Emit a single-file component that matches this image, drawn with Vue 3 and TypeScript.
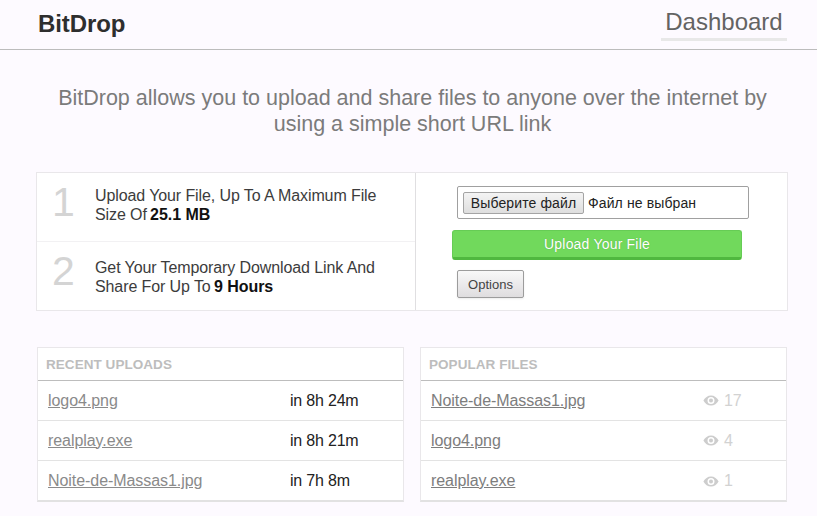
<script setup lang="ts">
interface Recent { name: string; time: string }
interface Popular { name: string; views: number }
const recent: Recent[] = [
  { name: 'logo4.png', time: 'in 8h 24m' },
  { name: 'realplay.exe', time: 'in 8h 21m' },
  { name: 'Noite-de-Massas1.jpg', time: 'in 7h 8m' },
]
const popular: Popular[] = [
  { name: 'Noite-de-Massas1.jpg', views: 17 },
  { name: 'logo4.png', views: 4 },
  { name: 'realplay.exe', views: 1 },
]
</script>

<template>
  <div class="page">
    <header class="top">
      <div class="brand">BitDrop</div>
      <a class="nav">Dashboard</a>
    </header>

    <p class="intro">BitDrop allows you to upload and share files to anyone over the internet by<br />using a simple short URL link</p>

    <section class="upload">
      <div class="steps">
        <div class="step">
          <span class="num">1</span>
          <p>Upload Your File, Up To A Maximum File<br />Size Of <b>25.1 MB</b></p>
        </div>
        <div class="step second">
          <span class="num">2</span>
          <p>Get Your Temporary Download Link And<br />Share For Up To <b>9 Hours</b></p>
        </div>
      </div>
      <div class="form">
        <div class="file">
          <button class="pick">Выберите файл</button>
          <span>Файл не выбран</span>
        </div>
        <button class="send">Upload Your File</button>
        <button class="opts">Options</button>
      </div>
    </section>

    <section class="lists">
      <div class="panel">
        <h3>RECENT UPLOADS</h3>
        <div v-for="r in recent" :key="r.name" class="row">
          <a class="link">{{ r.name }}</a>
          <span class="time">{{ r.time }}</span>
        </div>
      </div>
      <div class="panel">
        <h3>POPULAR FILES</h3>
        <div v-for="p in popular" :key="p.name" class="row">
          <a class="link">{{ p.name }}</a>
          <span class="views">
            <svg width="16" height="11" viewBox="0 0 16 11" aria-hidden="true">
              <path fill="#cdcdcd" fill-rule="evenodd" d="M8 .5c3.300 0 6 2 7.600 5-1.600 3-4.300 5-7.600 5S2 8.500.4 5.500C2 2.500 4.700.5 8 .5zm0 1.500a3.500 3.500 0 1 0 0 7 3.500 3.500 0 0 0 0-7zM8 3.500a2 2 0 1 1 0 4 2 2 0 0 1 0-4z"/>
            </svg>
            {{ p.views }}
          </span>
        </div>
      </div>
    </section>
  </div>
</template>

<style>
html, body { margin: 0; background: #fdfaff; }
</style>

<style scoped>
.page {
  width: 817px;
  height: 516px;
  overflow: hidden;
  background: #fdfaff;
  font-family: "Liberation Sans", Arial, sans-serif;
}
.top {
  height: 49px;
  border-bottom: 1px solid #bcbcbc;
  display: flex;
  justify-content: space-between;
  padding: 0 30px 0 38px;
  box-sizing: content-box;
}
.brand {
  font-size: 24px;
  font-weight: 700;
  color: #2e2e2e;
  line-height: 24px;
  letter-spacing: -0.1px;
  padding-top: 12px;
}
.nav {
  width: 126px;
  height: 29px;
  margin-top: 9px;
  border-bottom: 3px solid #e8e8e8;
  text-align: center;
  font-size: 24px;
  line-height: 26px;
  color: #636363;
}
.intro {
  margin: 35px 0 0;
  padding-left: 8px;
  text-align: center;
  font-size: 21.5px;
  line-height: 26px;
  color: #7b7b7b;
}
.upload {
  margin: 35px 29px 0 36px;
  height: 139px;
  box-sizing: border-box;
  display: flex;
  background: #fff;
  border: 1px solid #e9e7ea;
}
.steps {
  width: 378px;
  border-right: 1px solid #e0dfe1;
}
.step {
  height: 69px;
  display: flex;
  box-sizing: border-box;
  border-bottom: 1px solid #f2f1f3;
}
.step.second { border-bottom: 0; }
.num {
  width: 58px;
  padding-left: 15px;
  box-sizing: border-box;
  font-size: 41px;
  line-height: 58px;
  color: #d4d4d4;
}
.step p {
  margin: 13px 0 0;
  font-size: 16px;
  line-height: 19px;
  letter-spacing: -0.1px;
  color: #3c3c3c;
  white-space: nowrap;
}
.step.second p { margin-top: 16px; }
.step b { color: #111; letter-spacing: -0.05px; margin-left: -1px; }
.form {
  position: relative;
  flex: 1;
  display: flex;
  flex-direction: column;
  align-items: flex-start;
  padding: 13px 0 0 36px;
}
.file {
  width: 292px;
  height: 33px;
  box-sizing: border-box;
  margin-left: 5px;
  padding-left: 5px;
  display: flex;
  align-items: center;
  gap: 4px;
  border: 1px solid #a0a0a0;
  border-radius: 2px;
  font-size: 14px;
  letter-spacing: 0.12px;
  color: #222;
  background: #fff;
}
.pick {
  width: 121px;
  height: 22px;
  padding: 0;
  font: inherit;
  letter-spacing: inherit;
  color: #222;
  border: 1px solid #a4a4a4;
  border-radius: 2px;
  background: linear-gradient(#f4f4f4, #dedede);
}
.send {
  width: 290px;
  height: 30px;
  margin-top: 11px;
  padding: 0;
  border: 1px solid #66cc55;
  border-bottom: 3px solid #50b83f;
  border-radius: 3px;
  background: #71d95c;
  color: #fff;
  font: 14px "Liberation Sans", Arial, sans-serif;
  letter-spacing: 0.2px;
  text-shadow: 0 0 1px #55a845;
}
.opts {
  width: 67px;
  height: 28px;
  margin: 10px 0 0 5px;
  padding: 0;
  border: 1px solid #9c9c9c;
  border-radius: 2px;
  background: linear-gradient(#f8f8f8, #dfdddf);
  color: #444;
  font: 13px "Liberation Sans", Arial, sans-serif;
  box-shadow: 0 1px 2px rgba(0, 0, 0, .08);
}
.lists {
  margin: 36px 30px 0 37px;
  display: flex;
  justify-content: space-between;
}
.panel {
  width: 367px;
  height: 155px;
  box-sizing: border-box;
  background: #fff;
  border: 1px solid #e9e7ea;
  border-bottom: 2px solid #e2e2e2;
}
h3 {
  margin: 0;
  height: 33px;
  box-sizing: border-box;
  padding-left: 8px;
  border-bottom: 1px solid #bdbdbd;
  font-size: 13.5px;
  line-height: 33px;
  font-weight: 700;
  letter-spacing: 0.05px;
  color: #bdbdbd;
}
.row {
  height: 40px;
  box-sizing: border-box;
  display: flex;
  align-items: center;
  padding-left: 10px;
  border-bottom: 1px solid #e3e3e3;
  font-size: 16px;
  letter-spacing: -0.06px;
  white-space: nowrap;
}
.row:last-child { border-bottom: 0; }
.link {
  width: 242px;
  color: #8a8a8a;
  text-decoration: underline;
}
.panel:nth-child(2) .link { color: #7d7d7d; }
.time { color: #222; letter-spacing: -0.2px; }
.views {
  display: flex;
  align-items: center;
  gap: 5px;
  margin-left: 30px;
  color: #d2d2d2;
}
</style>
